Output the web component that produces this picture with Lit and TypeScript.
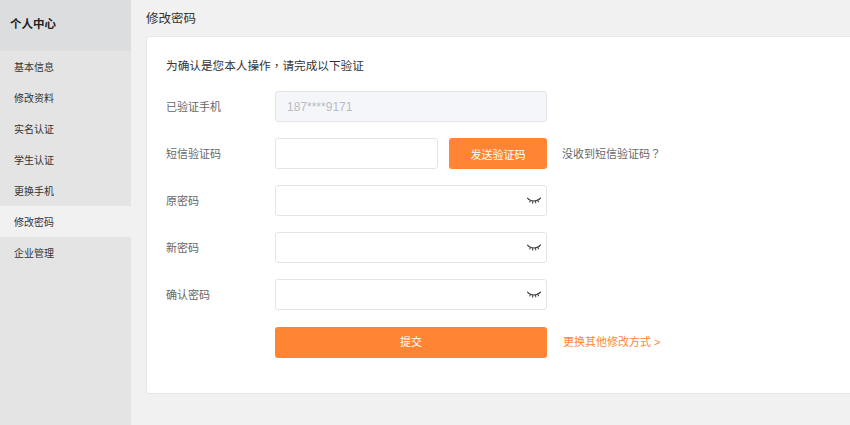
import { LitElement, html, css, svg } from "lit";
import { customElement } from "lit/decorators.js";

const eye = svg`<svg class="eye" width="14" height="8" viewBox="0 0 14 8" fill="none" stroke="#444" stroke-width="1.1" stroke-linecap="round"><path d="M1.5 2.2C4 4.6 10 4.6 12.5 2"/><path d="M0.5 1.2L1.5 2.2M3.4 3.4L2.8 5M5.8 4.1L5.6 6.2M8.4 4.1L8.8 6M10.6 3.4L11.6 4.8M12.5 2L13.5 1"/></svg>`;

@customElement("app-root")
export class AppRoot extends LitElement {
  static styles = css`
    :host { display: flex; width: 850px; height: 425px; overflow: hidden; background: #f1f1f1;
      font-family: "Liberation Sans", "Noto Sans CJK SC", sans-serif; color: #333; }
    .side { width: 131px; flex: none; background: #e4e4e4; }
    .side h2 { margin: 0; height: 51px; box-sizing: border-box; background: #dcdddf; display: flex; align-items: center;
      padding: 0 0 5px 10px; font-size: 11.5px; font-weight: bold; color: #222; }
    .item { height: 31px; display: flex; align-items: center; padding-left: 14px; font-size: 10px; color: #333; }
    .item.on { background: #f1f1f1; }
    .main { flex: 1; min-width: 0; padding-left: 15px; }
    .title { height: 36px; display: flex; align-items: center; font-size: 12.5px; color: #333; padding-bottom: 1px; box-sizing: border-box; }
    .card { width: 720px; height: 358px; box-sizing: border-box; background: #fff; border: 1px solid #e8e8e8;
      border-radius: 4px; padding: 20px 19px; }
    .lead { font-size: 11.65px; height: 16px; line-height: 16px; color: #333; margin-bottom: 18px; }
    .punct { font-family: "Noto Sans CJK TC", sans-serif; }
    .row { display: flex; align-items: center; height: 31px; margin-bottom: 16px; font-size: 11px; }
    .row.last { margin-top: 17px; }
    .label { width: 109px; flex: none; color: #666; font-size: 11px; padding-bottom: 2px; }
    .input { box-sizing: border-box; height: 31px; width: 272px; border: 1px solid #e3e4e8; border-radius: 3px;
      background: #fff; display: flex; align-items: center; justify-content: flex-end; padding-right: 5px; }
    .input.short { width: 163px; }
    .input.ro { background: #f5f6fa; justify-content: flex-start; padding-left: 11px; color: #b9bcc4; font-size: 12px; }
    .btn { box-sizing: border-box; height: 31px; background: #ff8534; color: #fff; border-radius: 3px;
      display: flex; align-items: center; justify-content: center; font-size: 11px; }
    .send { width: 98px; margin-left: 11px; }
    .submit { width: 272px; padding-bottom: 3px; }
    .hint { margin-left: 15px; color: #666; font-size: 11px; padding-bottom: 1px; }
    .link { margin-left: 16px; color: #ff8534; font-size: 11px; padding-bottom: 3px; }
    .eye { display: block; }
  `;

  render() {
    const side = ["基本信息", "修改资料", "实名认证", "学生认证", "更换手机", "修改密码", "企业管理"];
    return html`
      <nav class="side">
        <h2>个人中心</h2>
        ${side.map((s, i) => html`<div class="item ${i === 5 ? "on" : ""}">${s}</div>`)}
      </nav>
      <div class="main">
        <div class="title">修改密码</div>
        <div class="card">
          <div class="lead">为确认是您本人操作<span class="punct">，</span>请完成以下验证</div>
          <div class="row"><span class="label">已验证手机</span><div class="input ro">187****9171</div></div>
          <div class="row"><span class="label">短信验证码</span><div class="input short"></div>
            <div class="btn send">发送验证码</div><span class="hint">没收到短信验证码<span class="punct">？</span></span></div>
          ${["原密码", "新密码", "确认密码"].map(
            (l) => html`<div class="row"><span class="label">${l}</span><div class="input">${eye}</div></div>`
          )}
          <div class="row last"><span class="label"></span><div class="btn submit">提交</div><span class="link">更换其他修改方式 &gt;</span></div>
        </div>
      </div>
    `;
  }
}
